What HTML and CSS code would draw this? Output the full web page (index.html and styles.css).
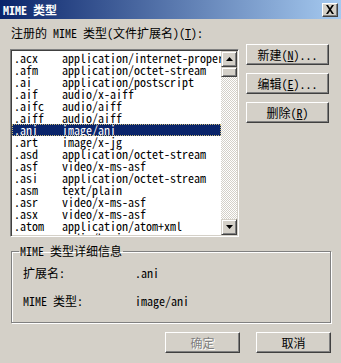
FILE: index.html
```html
<!DOCTYPE html>
<html lang="zh-CN">
<head>
<meta charset="utf-8">
<title>MIME 类型</title>
<link rel="stylesheet" href="styles.css">
</head>
<body>
<div class="dialog">
  <div class="titlebar">
    <span class="title">MIME 类型</span>
    <span class="close"><svg width="10" height="9" viewBox="0 0 10 9"><path d="M1 0h2l2 3 2-3h2L6 4.5 9 9H7L5 6 3 9H1l3-4.5z" fill="#000"/></svg></span>
  </div>
  <div class="content">
    <div class="reglabel">注册的 MIME 类型(文件扩展名)(<u>T</u>):</div>
    <div class="main">
      <div class="listbox">
        <div class="rows">
          <div class="row"><span class="ext">.acx</span><span class="type">application/internet-proper</span></div>
          <div class="row"><span class="ext">.afm</span><span class="type">application/octet-stream</span></div>
          <div class="row"><span class="ext">.ai</span><span class="type">application/postscript</span></div>
          <div class="row"><span class="ext">.aif</span><span class="type">audio/x-aiff</span></div>
          <div class="row"><span class="ext">.aifc</span><span class="type">audio/aiff</span></div>
          <div class="row"><span class="ext">.aiff</span><span class="type">audio/aiff</span></div>
          <div class="row selected"><span class="ext">.ani</span><span class="type">image/ani</span></div>
          <div class="row"><span class="ext">.art</span><span class="type">image/x-jg</span></div>
          <div class="row"><span class="ext">.asd</span><span class="type">application/octet-stream</span></div>
          <div class="row"><span class="ext">.asf</span><span class="type">video/x-ms-asf</span></div>
          <div class="row"><span class="ext">.asi</span><span class="type">application/octet-stream</span></div>
          <div class="row"><span class="ext">.asm</span><span class="type">text/plain</span></div>
          <div class="row"><span class="ext">.asr</span><span class="type">video/x-ms-asf</span></div>
          <div class="row"><span class="ext">.asx</span><span class="type">video/x-ms-asf</span></div>
          <div class="row"><span class="ext">.atom</span><span class="type">application/atom+xml</span></div>
          <div class="row"><span class="ext">.au</span><span class="type">audio/basic</span></div>
        </div>
        <div class="scrollbar">
          <div class="sbtn"><svg width="7" height="4" viewBox="0 0 7 4"><path d="M3.5 0L7 4H0z" fill="#000"/></svg></div>
          <div class="thumb"></div>
          <div class="track"></div>
          <div class="sbtn"><svg width="7" height="4" viewBox="0 0 7 4"><path d="M0 0h7L3.5 4z" fill="#000"/></svg></div>
        </div>
      </div>
      <div class="sidebtns">
        <div class="btn">新建(<u>N</u>)...</div>
        <div class="btn">编辑(<u>E</u>)...</div>
        <div class="btn">删除(<u>R</u>)</div>
      </div>
    </div>
    <fieldset class="details">
      <legend>MIME 类型详细信息</legend>
      <div class="drow"><span class="dlabel">扩展名:</span><span class="dval">.ani</span></div>
      <div class="drow"><span class="dlabel">MIME 类型:</span><span class="dval">image/ani</span></div>
    </fieldset>
    <div class="footer">
      <div class="btn wide disabled">确定</div>
      <div class="btn wide">取消</div>
    </div>
  </div>
</div>
</body>
</html>
```
FILE: styles.css
```css
html, body {
  margin: 0;
  padding: 0;
}
body {
  width: 341px;
  height: 363px;
  overflow: hidden;
  background: #d4d0c8;
  font-family: "Noto Sans Mono CJK SC", "Noto Sans CJK SC", "Liberation Mono", monospace;
  font-size: 12px;
  line-height: 12px;
  color: #000;
}
.dialog {
  width: 341px;
  height: 363px;
}
.titlebar {
  height: 19px;
  display: flex;
  align-items: center;
  justify-content: space-between;
  background: linear-gradient(to right, #0a246a, #a6caf0);
  padding: 0 3px 0 3px;
  box-sizing: border-box;
}
.title {
  color: #fff;
  font-weight: bold;
}
.close {
  width: 16px;
  height: 14px;
  box-sizing: border-box;
  background: #d4d0c8;
  border: 1px solid;
  border-color: #fff #404040 #404040 #fff;
  box-shadow: inset -1px -1px #808080;
  display: flex;
  align-items: center;
  justify-content: center;
}
.content {
  padding: 0 10px;
}
.reglabel {
  margin-top: 8px;
  height: 12px;
  padding-left: 1px;
}
.main {
  display: flex;
  align-items: flex-start;
  margin-top: 5px;
}
.listbox {
  margin-top: 5px;
  width: 229px;
  height: 188px;
  box-sizing: border-box;
  border: 1px solid;
  border-color: #808080 #fff #fff #808080;
  box-shadow: inset 1px 1px #404040, inset -1px -1px #d4d0c8;
  background: #fff;
  display: flex;
  padding: 1px;
  overflow: hidden;
}
.rows {
  flex: 1;
  overflow: hidden;
  padding-top: 1px;
}
.row {
  display: flex;
  height: 12px;
  white-space: nowrap;
  padding-left: 2px;
  box-sizing: border-box;
}
.row.selected {
  background: #0a246a;
  color: #fff;
  outline: 1px dotted #c8b878;
  outline-offset: -1px;
}
.ext {
  width: 48px;
  flex: none;
}
.type {
  flex: none;
}
.scrollbar {
  width: 16px;
  flex: none;
  display: flex;
  flex-direction: column;
}
.sbtn, .thumb {
  height: 16px;
  box-sizing: border-box;
  background: #d4d0c8;
  border: 1px solid;
  border-color: #d4d0c8 #404040 #404040 #d4d0c8;
  box-shadow: inset 1px 1px #fff, inset -1px -1px #808080;
  display: flex;
  align-items: center;
  justify-content: center;
  flex: none;
}
.thumb {
  height: 10px;
}
.track {
  flex: 1;
  background-color: #d4d0c8;
  background-image: conic-gradient(#fff 25%, #d4d0c8 0 50%, #fff 0 75%, #d4d0c8 0);
  background-size: 2px 2px;
}
.sidebtns {
  margin-left: 7px;
  display: flex;
  flex-direction: column;
  gap: 8px;
}
.btn {
  width: 83px;
  height: 21px;
  box-sizing: border-box;
  border: 1px solid;
  border-color: #fff #404040 #404040 #fff;
  box-shadow: inset -1px -1px #808080;
  display: flex;
  align-items: center;
  justify-content: center;
  padding-top: 1px;
}
.btn.wide {
  width: 75px;
}
.btn.disabled {
  color: #808080;
  text-shadow: 1px 1px #fff;
}
.details {
  margin: 8px 0 0 1px;
  width: 320px;
  box-sizing: border-box;
  border: 1px solid #808080;
  box-shadow: inset 1px 1px #fff, 1px 1px #fff;
  padding: 10px 0 15px 11px;
  min-width: 0;
}
.details legend {
  padding: 0 1px;
  margin-left: -4px;
  line-height: 12px;
}
.drow {
  display: flex;
  height: 12px;
}
.drow + .drow {
  margin-top: 16px;
}
.dlabel {
  width: 112px;
}
.footer {
  display: flex;
  justify-content: flex-end;
  gap: 16px;
  margin-top: 9px;
}
```
